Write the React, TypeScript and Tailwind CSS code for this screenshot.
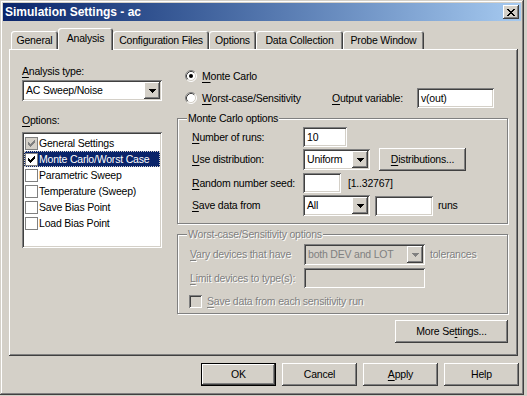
import type { ReactNode } from 'react';

const raised = 'shadow-[inset_-1px_-1px_#404040,inset_1px_1px_#fff,inset_-2px_-2px_#808080,inset_2px_2px_#d4d0c8]';
const sunken = 'shadow-[inset_1px_1px_#808080,inset_-1px_-1px_#fff,inset_2px_2px_#404040,inset_-2px_-2px_#d4d0c8]';
const frame = 'shadow-[inset_-1px_-1px_#404040,inset_1px_1px_#d4d0c8,inset_-2px_-2px_#808080,inset_2px_2px_#fff]';
const etched = 'border border-[#808080] shadow-[inset_1px_1px_#fff,1px_1px_#fff]';
const dim = 'text-[#808080] [text-shadow:1px_1px_0_#fff]';

function U({ children }: { children: ReactNode }) {
  return <span className="underline underline-offset-[2px] decoration-1">{children}</span>;
}

function Arrow({ color = '#000' }: { color?: string }) {
  return (
    <svg width="7" height="4" viewBox="0 0 7 4" shapeRendering="crispEdges">
      <path d="M0 0h7v1h-7z M1 1h5v1h-5z M2 2h3v1h-3z M3 3h1v1h-1z" fill={color} />
    </svg>
  );
}

function Check({ color = '#000' }: { color?: string }) {
  return (
    <svg width="7" height="7" viewBox="0 0 7 7" shapeRendering="crispEdges">
      <path
        d="M6 0h1v1h-1z M5 1h2v1h-2z M0 2h1v1h-1z M4 2h3v1h-3z M0 3h2v1h-2z M3 3h3v1h-3z M0 4h5v1h-5z M1 5h3v1h-3z M2 6h1v1h-1z"
        fill={color}
      />
    </svg>
  );
}

function Radio({ on }: { on?: boolean }) {
  return (
    <svg width="12" height="12" viewBox="0 0 12 12" className="shrink-0">
      <circle cx="6" cy="6" r="5" fill="#fff" />
      <path d="M2.11 9.89 A5.5 5.5 0 0 1 9.89 2.11" stroke="#808080" fill="none" />
      <path d="M9.89 2.11 A5.5 5.5 0 0 1 2.11 9.89" stroke="#fff" fill="none" />
      <path d="M2.82 9.18 A4.5 4.5 0 0 1 9.18 2.82" stroke="#404040" fill="none" />
      <path d="M9.18 2.82 A4.5 4.5 0 0 1 2.82 9.18" stroke="#d4d0c8" fill="none" />
      {on && <circle cx="6" cy="6" r="2" fill="#000" />}
    </svg>
  );
}

function Combo({ value, w, disabled }: { value: string; w: string; disabled?: boolean }) {
  return (
    <div className={`flex items-center h-[21px] p-[2px] ${w} ${sunken} ${disabled ? 'bg-[#d4d0c8]' : 'bg-white'}`}>
      <span className={`flex-1 pl-[2px] whitespace-nowrap ${disabled ? 'text-[#808080]' : ''}`}>{value}</span>
      <div className={`w-[16px] h-[17px] flex items-center justify-center bg-[#d4d0c8] ${raised}`}>
        <Arrow color={disabled ? '#808080' : '#000'} />
      </div>
    </div>
  );
}

function Field({ value, w, h = 'h-[20px]', disabled }: { value?: string; w: string; h?: string; disabled?: boolean }) {
  return (
    <div className={`flex items-center px-[4px] ${w} ${h} ${sunken} ${disabled ? 'bg-[#d4d0c8]' : 'bg-white'}`}>
      {value}
    </div>
  );
}

function Btn({ children, w, isDefault }: { children: ReactNode; w: string; isDefault?: boolean }) {
  return (
    <button
      className={`h-[23px] ${w} flex items-center justify-center bg-[#d4d0c8] ${
        isDefault
          ? 'shadow-[inset_0_0_0_1px_#000,inset_-2px_-2px_#404040,inset_2px_2px_#fff,inset_-3px_-3px_#808080]'
          : raised
      }`}
    >
      {children}
    </button>
  );
}

const tabs = [
  { name: 'General', w: 'w-[47px]' },
  { name: 'Analysis', w: 'w-[55px]', active: true },
  { name: 'Configuration Files', w: 'w-[96px]' },
  { name: 'Options', w: 'w-[47px]' },
  { name: 'Data Collection', w: 'w-[87px]' },
  { name: 'Probe Window', w: 'w-[81px]' },
];

const options = [
  { name: 'General Settings', state: 'gray' },
  { name: 'Monte Carlo/Worst Case', state: 'on', sel: true },
  { name: 'Parametric Sweep' },
  { name: 'Temperature (Sweep)' },
  { name: 'Save Bias Point' },
  { name: 'Load Bias Point' },
];

export default function App() {
  return (
    <div className="w-[527px] h-[396px] bg-[#d4d0c8] font-['Liberation_Sans',Arial,sans-serif] text-[10.5px] leading-[13px] tracking-[-0.2px] text-black select-none">
      <div className={`w-[524px] h-[395px] p-[3px] flex flex-col ${frame}`}>
        {/* title bar */}
        <div className="h-[18px] flex items-center justify-between pl-[2px] pr-[2px] bg-linear-to-r from-[#0a246a] to-[#a6caf0]">
          <span className="text-white font-bold text-[12px] leading-[14px] tracking-normal">Simulation Settings - ac</span>
          <div className={`w-[16px] h-[14px] flex items-center justify-center bg-[#d4d0c8] ${raised}`}>
            <svg width="8" height="7" viewBox="0 0 8 7" shapeRendering="crispEdges">
              <path
                d="M0 0h2v1h-2z M6 0h2v1h-2z M1 1h2v1h-2z M5 1h2v1h-2z M2 2h4v1h-4z M3 3h2v1h-2z M2 4h4v1h-4z M1 5h2v1h-2z M5 5h2v1h-2z M0 6h2v1h-2z M6 6h2v1h-2z"
                fill="#000"
              />
            </svg>
          </div>
        </div>

        {/* tabs */}
        <div className="flex items-end h-[22px] mt-[7px] ml-[8px] -mb-[1px] relative z-10">
          {tabs.map((t) => (
            <div
              key={t.name}
              className={`${t.w} flex justify-center whitespace-nowrap bg-[#d4d0c8] rounded-t-[3px] shadow-[inset_1px_1px_#fff,inset_-1px_0_#404040,inset_-2px_0_#808080] ${
                t.active ? 'h-[22px] pt-[4px]' : 'h-[18px] mb-[1px] pt-[3px]'
              }`}
            >
              {t.name}
            </div>
          ))}
        </div>

        {/* panel */}
        <div className={`ml-[6px] w-[509px] h-[307px] flex ${raised}`}>
          {/* left column */}
          <div className="ml-[13px] w-[140px] flex flex-col">
            <div className="mt-[16px]">
              <U>A</U>nalysis type:
            </div>
            <div className="mt-[2px]">
              <Combo value="AC Sweep/Noise" w="w-[140px]" />
            </div>
            <div className="mt-[13px]">
              <U>O</U>ptions:
            </div>
            <div className={`mt-[5px] h-[116px] bg-white p-[2px] pt-[3px] ${sunken}`}>
              {options.map((o) => (
                <div
                  key={o.name}
                  className={`h-[16px] flex items-center pl-[1px] ${
                    o.sel ? 'bg-[#0a246a] text-white outline-1 outline-dotted outline-[#d4d0c8] -outline-offset-1' : ''
                  }`}
                >
                  <div
                    className={`w-[13px] h-[13px] border border-[#808080] flex items-center justify-center ${
                      o.state === 'gray' ? 'bg-[#d4d0c8]' : 'bg-white'
                    }`}
                  >
                    {o.state === 'on' && <Check />}
                    {o.state === 'gray' && <Check color="#808080" />}
                  </div>
                  <span className="ml-[1px] whitespace-nowrap">{o.name}</span>
                </div>
              ))}
            </div>
          </div>

          {/* right column */}
          <div className="ml-[15px] w-[331px] flex flex-col">
            <div className="mt-[19px] h-[16px] flex items-center pl-[8px]">
              <Radio on />
              <span className="ml-[5px]">
                <U>M</U>onte Carlo
              </span>
            </div>
            <div className="mt-[4px] h-[20px] flex items-center">
              <div className="w-[155px] pl-[8px] flex items-center">
                <Radio />
                <span className="ml-[5px]">
                  <U>W</U>orst-case/Sensitivity
                </span>
              </div>
              <span className="w-[85px]">
                <U>O</U>utput variable:
              </span>
              <Field value="v(out)" w="w-[77px]" />
            </div>

            <fieldset className={`mt-[4px] pb-[7px] ${etched}`}>
              <legend className="ml-[9px] px-[1px] bg-[#d4d0c8]">Monte Carlo options</legend>
              <div className="mt-[2px] h-[20px] flex items-center pl-[14px]">
                <span className="w-[111px]">
                  <U>N</U>umber of runs:
                </span>
                <Field value="10" w="w-[44px]" />
              </div>
              <div className="mt-[1px] h-[23px] flex items-center pl-[14px]">
                <span className="w-[111px]">
                  <U>U</U>se distribution:
                </span>
                <Combo value="Uniform" w="w-[67px]" />
                <div className="ml-[9px]">
                  <Btn w="w-[87px]">
                    <U>D</U>istributions...
                  </Btn>
                </div>
              </div>
              <div className="mt-[2px] h-[20px] flex items-center pl-[14px]">
                <span className="w-[111px] whitespace-nowrap">
                  <U>R</U>andom number seed:
                </span>
                <Field w="w-[38px]" />
                <span className="ml-[7px]">[1..32767]</span>
              </div>
              <div className="mt-[2px] h-[21px] flex items-center pl-[14px]">
                <span className="w-[111px]">
                  <U>S</U>ave data from
                </span>
                <Combo value="All" w="w-[67px]" />
                <Field w="w-[58px] ml-[5px]" />
                <span className="ml-[5px]">runs</span>
              </div>
            </fieldset>

            <fieldset className={`mt-[4px] pb-[4px] ${etched}`}>
              <legend className={`ml-[9px] px-[1px] bg-[#d4d0c8] ${dim}`}>Worst-case/Sensitivity options</legend>
              <div className="mt-[3px] h-[21px] flex items-center pl-[12px]">
                <span className={`w-[114px] whitespace-nowrap ${dim}`}>
                  <U>V</U>ary devices that have
                </span>
                <Combo value="both DEV and LOT" w="w-[121px]" disabled />
                <span className={`ml-[5px] ${dim}`}>tolerances</span>
              </div>
              <div className="mt-[3px] h-[20px] flex items-center pl-[12px]">
                <span className={`w-[114px] whitespace-nowrap ${dim}`}>
                  <U>L</U>imit devices to type(s):
                </span>
                <Field w="w-[121px]" disabled />
              </div>
              <div className="mt-[5px] h-[16px] flex items-center pl-[11px]">
                <div className={`w-[13px] h-[13px] bg-[#d4d0c8] ${sunken}`} />
                <span className={`ml-[5px] ${dim}`}>
                  <U>S</U>ave data from each sensitivity run
                </span>
              </div>
            </fieldset>

            <div className="mt-[6px] self-end">
              <Btn w="w-[113px]">
                More Se<U>t</U>tings...
              </Btn>
            </div>
          </div>
        </div>

        {/* dialog buttons */}
        <div className="mt-[7px] mr-[2px] flex justify-end gap-[6px]">
          <Btn w="w-[75px]" isDefault>
            OK
          </Btn>
          <Btn w="w-[75px]">Cancel</Btn>
          <Btn w="w-[75px]">
            <U>A</U>pply
          </Btn>
          <Btn w="w-[75px]">Help</Btn>
        </div>
      </div>
    </div>
  );
}
